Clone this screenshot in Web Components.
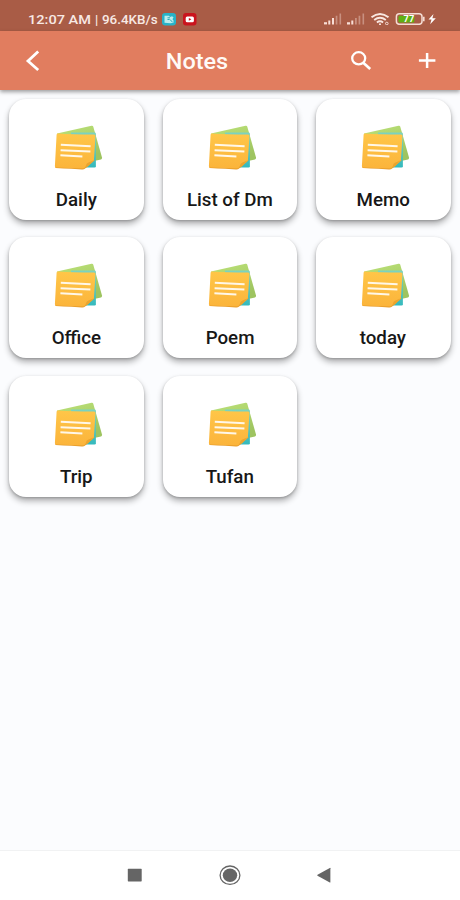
<!DOCTYPE html>
<html lang="en">
<head>
<meta charset="utf-8">
<title>Notes</title>
<style>
html,body{margin:0;height:100%}
body{font-family:Roboto,"Liberation Sans",sans-serif;background:#fbfcfe;overflow:hidden}
</style>
</head>
<body>
<notes-app></notes-app>
<script>
function define(name, markup) {
  const t = document.createElement('template');
  t.innerHTML = markup;
  customElements.define(name, class extends HTMLElement {
    constructor() {
      super();
      this.attachShadow({ mode: 'open' }).append(t.content.cloneNode(true));
    }
  });
}

define('status-bar', `
<style>
:host{display:flex;height:31px;flex:none;box-sizing:border-box;background:#a95c46;color:#f8e9e4;padding:8px 23px 0 28px;align-items:flex-start;font-weight:500;font-size:13px;line-height:23px}
.time{width:67px;transform:scaleX(1.12);transform-origin:0 0;white-space:nowrap}
.bar{width:7px}
.rate{width:60px;transform:scaleX(1.03);transform-origin:0 0;white-space:nowrap}
svg{display:block;flex:none}
.apps{display:flex;gap:7px;padding-top:5px}
.sys{margin-left:auto}
</style>
<span class="time">12:07 AM</span><span class="bar">|</span><span class="rate">96.4KB/s</span>
<div class="apps">
<svg width="14" height="13" viewBox="0 0 14 13"><rect width="14" height="12.5" rx="3.2" fill="#28b3c8"/><path d="M2.500 2.800h4.500l1 1.200 2-.8 1.500 1-1 2 1 1.300v2.300l-3 .4-6-.4z" fill="#bceeed"/><path d="M5.500 4.800h2.500M5.500 6.500h2M8 6.500l2.600 2.800" stroke="#28a9bd" stroke-width="1"/></svg>
<svg width="14" height="13" viewBox="0 0 14 13"><rect width="13.500" height="12.500" rx="3" fill="#ca141d"/><rect x="2.700" y="3.400" width="8.200" height="5.900" rx="1.500" fill="#fff"/><path d="M5.800 4.900v2.800l2.600-1.400z" fill="#c6141c"/></svg>
</div>
<svg class="sys" width="114" height="17" viewBox="323 8 114 17">
<g fill="#f8ded6">
<path d="M324 22.200h3v2.200h-3z"/><path d="M328.300 20.400h2v4h-2zM332 18h2v6.400h-2z"/><path d="M335.700 15.700h1.700v8.700h-1.700zM339.500 13.500h1.600v10.900h-1.600z" opacity=".4"/>
<path d="M347 22.200h3v2.200h-3zM351.300 20.400h2v4h-2z"/><path d="M355 18h1.800v6.400h-1.800zM358.600 15.700h1.700v8.700h-1.700zM362.500 13.500h1.600v10.900h-1.600z" opacity=".4"/>
</g>
<g fill="none" stroke="#f9e7e1" stroke-width="1.900"><path d="M371.500 17.300q8.500-6.700 17 0M374.200 20q5.800-4.500 11.600 0M376.900 22.500q3.100-2.400 6.200 0"/><circle cx="386.800" cy="23.500" r="1.300" stroke-width=".9"/></g><circle cx="380" cy="24.200" r="1" fill="#f9e7e1"/>
<rect x="396.400" y="13.700" width="25.600" height="10.600" rx="3" fill="none" stroke="#f5ddd5" stroke-width="1.500"/>
<rect x="398.500" y="15.700" width="15.800" height="6.700" rx="1" fill="#5eb013"/><path d="M423 16.800h1.600v4.400H423z" fill="#f5ddd5"/>
<text x="408.900" y="22" text-anchor="middle" font-family="Roboto" font-weight="700" font-size="8.400" textLength="10.600" lengthAdjust="spacingAndGlyphs" fill="#fff">77</text>
<path d="M433.500 14l-5 5.600h3l-1.300 4.700 5.600-6h-3.400z" fill="#fff"/>
</svg>`);

define('app-bar', `
<style>
:host{display:grid;grid-template-columns:1fr auto 1fr;align-items:center;height:59px;flex:none;box-sizing:border-box;background:#e17d5f;color:#fffaf7;box-shadow:0 2px 4px rgba(0,0,0,.38);position:relative}
svg{display:block}
h1{margin:0;font-size:21.8px;font-weight:500;line-height:59px;transform:translate(-33px,.6px) scaleX(1.075)}
.back{padding-left:24px}
.tools{display:flex;justify-content:flex-end;gap:46px;padding-right:24px}
</style>
<svg class="back" width="18" height="24" viewBox="0 0 18 24"><path d="M14.200 2.500 4 12l10.200 9" fill="none" stroke="#fff" stroke-width="2.800"/></svg>
<h1><slot></slot></h1>
<div class="tools">
<svg width="22" height="22" viewBox="0 0 22 22"><ellipse cx="8.700" cy="8.300" rx="6.500" ry="6.100" fill="none" stroke="#fff" stroke-width="2.300"/><path d="m13.300 12.700 6.900 6.200" stroke="#fff" stroke-width="2.700"/></svg>
<svg width="18" height="20" viewBox="0 0 18 20"><path d="M.9 10.400h16.500M9.100 2.900v15" stroke="#fff" stroke-width="2.500"/></svg>
</div>`);

define('note-icon', `
<style>:host{display:block;width:52px;height:48px}svg{display:block}</style>
<svg width="52" height="48" viewBox="52 123 52 48">
<defs><linearGradient id="g" x2=".4" y2="1"><stop stop-color="#bce278"/><stop offset="1" stop-color="#9ec460"/></linearGradient>
<linearGradient id="y" x2="0" y2="1"><stop stop-color="#ffc648"/><stop offset="1" stop-color="#fbb43b"/></linearGradient>
<linearGradient id="b" x2="0" y2="1"><stop stop-color="#7cd3c0"/><stop offset="1" stop-color="#34b9bd"/></linearGradient></defs>
<path d="M57 133.400 91.500 125.800q1.400-.3 1.800 1L102 157.500q.3 1.500-1 1.900L94 160.900 65 150z" fill="url(#g)"/>
<path d="M71 132.600h23.500q1.400 0 1.400 1.300v32.400q0 1.300-1.400 1.300H72z" fill="url(#b)"/>
<path d="m55.300 167 .2 1.100q8 .6 16 .7l10.500.6q2 .1 3.400-1.200L95 160z" fill="#e79b28"/>
<path d="M58.300 133.400q14 .9 35.800 1.200 1.600.1 1.400 1.500l-1.600 24.300q-2.500 3.100-10.400 8.200L56 167.500q-1.200 0-1.100-1.500l1.700-31.200q.1-1.600 1.700-1.400z" fill="url(#y)"/>
<path d="m93.900 160.200-5.400 2.200q-2 .8-2.400 2.600l-1.200 3.300 3.300-2z" fill="#eaa42e"/>
<path d="m60.800 144.800 29.800 1.500M60.600 150.200l29.800 1.300M60.400 155.200l22 1.300" stroke="#fff7e8" stroke-width="2"/>
</svg>`);

define('note-card', `
<style>
:host{display:flex;flex-direction:column;align-items:center;box-sizing:border-box;height:121px;padding-top:24.300px;background:#fff;border-radius:17px;box-shadow:0 4px 6px rgba(0,0,0,.31),0 1px 2.500px rgba(0,0,0,.2)}
.name{margin-top:15.700px;font-size:18px;line-height:24px;font-weight:500;color:#171717;white-space:nowrap;transform:translate(-.4px,.6px) scaleX(1.04)}
note-icon{margin-left:3.400px}
</style>
<note-icon></note-icon><div class="name"><slot></slot></div>`);

define('nav-bar', `
<style>
:host{display:flex;justify-content:center;align-items:center;flex:none;height:50px;box-sizing:border-box;background:#fff;border-top:1px solid #f1f2f3}
svg{display:block}
</style>
<svg width="206" height="24" viewBox="127 863.800 206 24">
<rect x="127.800" y="868.600" width="13.900" height="12.600" rx=".6" fill="#656565"/>
<ellipse cx="230" cy="875" rx="9.900" ry="9.200" fill="none" stroke="#656565" stroke-width="1.300"/><ellipse cx="230" cy="875" rx="7.200" ry="6.700" fill="#656565"/>
<path d="M330.400 868v14q0 .5-.6.200L317.500 875.500q-.6-.5 0-1L329.800 867.700q.6-.2.600.3z" fill="#656565"/>
</svg>`);

define('notes-app', `
<style>
:host{display:flex;flex-direction:column;width:460px;height:900px;background:#fbfcfe}
main{flex:1;display:grid;grid-template-columns:repeat(3,1fr);column-gap:18.600px;row-gap:17.500px;align-content:start;padding:8.700px 9.300px}
</style>
<status-bar></status-bar>
<app-bar>Notes</app-bar>
<main>
<note-card>Daily</note-card><note-card>List of Dm</note-card><note-card>Memo</note-card>
<note-card>Office</note-card><note-card>Poem</note-card><note-card>today</note-card>
<note-card>Trip</note-card><note-card>Tufan</note-card>
</main>
<nav-bar></nav-bar>`);
</script>
</body>
</html>
